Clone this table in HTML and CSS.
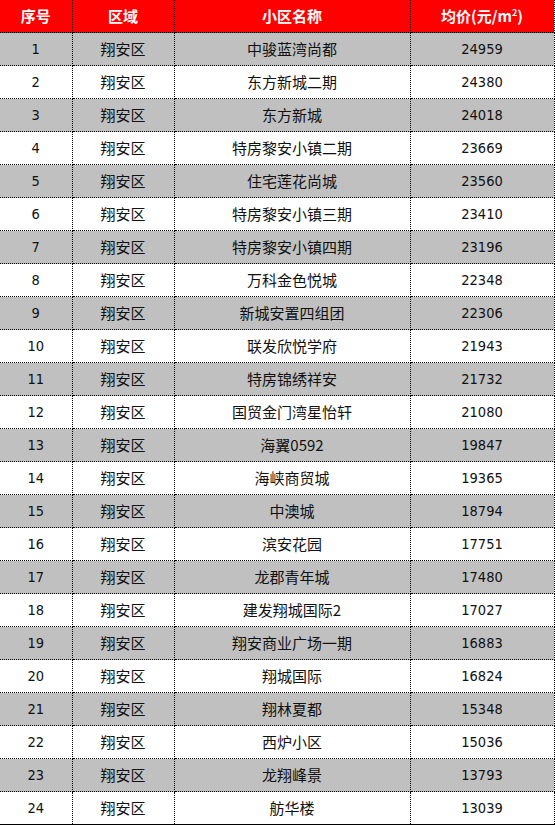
FILE: index.html
```html
<!DOCTYPE html>
<html lang="zh">
<head>
<meta charset="utf-8">
<link rel="stylesheet" href="styles.css">
</head>
<body>
<table class="tbl">
<colgroup><col class="c1"><col class="c2"><col class="c3"><col class="c4"></colgroup>
<thead>
<tr class="head"><th>序号</th><th>区域</th><th>小区名称</th><th>均价(元/m<sup class="sq">2</sup>)</th></tr>
</thead>
<tbody>
<tr class="odd"><td class="num">1</td><td>翔安区</td><td>中骏蓝湾尚都</td><td class="num">24959</td></tr>
<tr><td class="num">2</td><td>翔安区</td><td>东方新城二期</td><td class="num">24380</td></tr>
<tr class="odd"><td class="num">3</td><td>翔安区</td><td>东方新城</td><td class="num">24018</td></tr>
<tr><td class="num">4</td><td>翔安区</td><td>特房黎安小镇二期</td><td class="num">23669</td></tr>
<tr class="odd"><td class="num">5</td><td>翔安区</td><td>住宅莲花尚城</td><td class="num">23560</td></tr>
<tr><td class="num">6</td><td>翔安区</td><td>特房黎安小镇三期</td><td class="num">23410</td></tr>
<tr class="odd"><td class="num">7</td><td>翔安区</td><td>特房黎安小镇四期</td><td class="num">23196</td></tr>
<tr><td class="num">8</td><td>翔安区</td><td>万科金色悦城</td><td class="num">22348</td></tr>
<tr class="odd"><td class="num">9</td><td>翔安区</td><td>新城安置四组团</td><td class="num">22306</td></tr>
<tr><td class="num">10</td><td>翔安区</td><td>联发欣悦学府</td><td class="num">21943</td></tr>
<tr class="odd"><td class="num">11</td><td>翔安区</td><td>特房锦绣祥安</td><td class="num">21732</td></tr>
<tr><td class="num">12</td><td>翔安区</td><td>国贸金门湾星怡轩</td><td class="num">21080</td></tr>
<tr class="odd"><td class="num">13</td><td>翔安区</td><td>海翼0592</td><td class="num">19847</td></tr>
<tr><td class="num">14</td><td>翔安区</td><td>海峡商贸城</td><td class="num">19365</td></tr>
<tr class="odd"><td class="num">15</td><td>翔安区</td><td>中澳城</td><td class="num">18794</td></tr>
<tr><td class="num">16</td><td>翔安区</td><td>滨安花园</td><td class="num">17751</td></tr>
<tr class="odd"><td class="num">17</td><td>翔安区</td><td>龙郡青年城</td><td class="num">17480</td></tr>
<tr><td class="num">18</td><td>翔安区</td><td>建发翔城国际2</td><td class="num">17027</td></tr>
<tr class="odd"><td class="num">19</td><td>翔安区</td><td>翔安商业广场一期</td><td class="num">16883</td></tr>
<tr><td class="num">20</td><td>翔安区</td><td>翔城国际</td><td class="num">16824</td></tr>
<tr class="odd"><td class="num">21</td><td>翔安区</td><td>翔林夏都</td><td class="num">15348</td></tr>
<tr><td class="num">22</td><td>翔安区</td><td>西炉小区</td><td class="num">15036</td></tr>
<tr class="odd"><td class="num">23</td><td>翔安区</td><td>龙翔峰景</td><td class="num">13793</td></tr>
<tr class="last"><td class="num">24</td><td>翔安区</td><td>舫华楼</td><td class="num">13039</td></tr>
</tbody>
</table>
</body>
</html>
```
FILE: styles.css
```css
html, body {
  margin: 0;
  padding: 0;
  background: #ffffff;
}
.tbl {
  border-collapse: collapse;
  table-layout: fixed;
  width: 554px;
  font-family: "Noto Sans CJK SC", "Noto Sans", sans-serif;
  font-size: 15px;
  color: #111111;
}
.c1 { width: 72px; }
.c2 { width: 102px; }
.c3 { width: 236px; }
.c4 { width: 144px; }
.tbl th, .tbl td {
  height: 32px;
  padding: 0;
  text-align: center;
  vertical-align: middle;
  border-right: 1px dotted #000;
  border-bottom: 1px dotted #000;
  line-height: 32px;
  white-space: nowrap;
}
.head th {
  background: #ff0000;
  color: #ffffff;
  font-weight: bold;
  font-size: 15px;
}
.sq {
  font-size: 9px;
  line-height: 0;
  vertical-align: 6px;
}
.odd td {
  background: #c0c0c0;
}
.num {
  font-family: "DejaVu Sans Condensed", "DejaVu Sans", sans-serif;
  font-size: 14.5px;
}
.last td {
  border-bottom: 1px solid #000;
}
```
